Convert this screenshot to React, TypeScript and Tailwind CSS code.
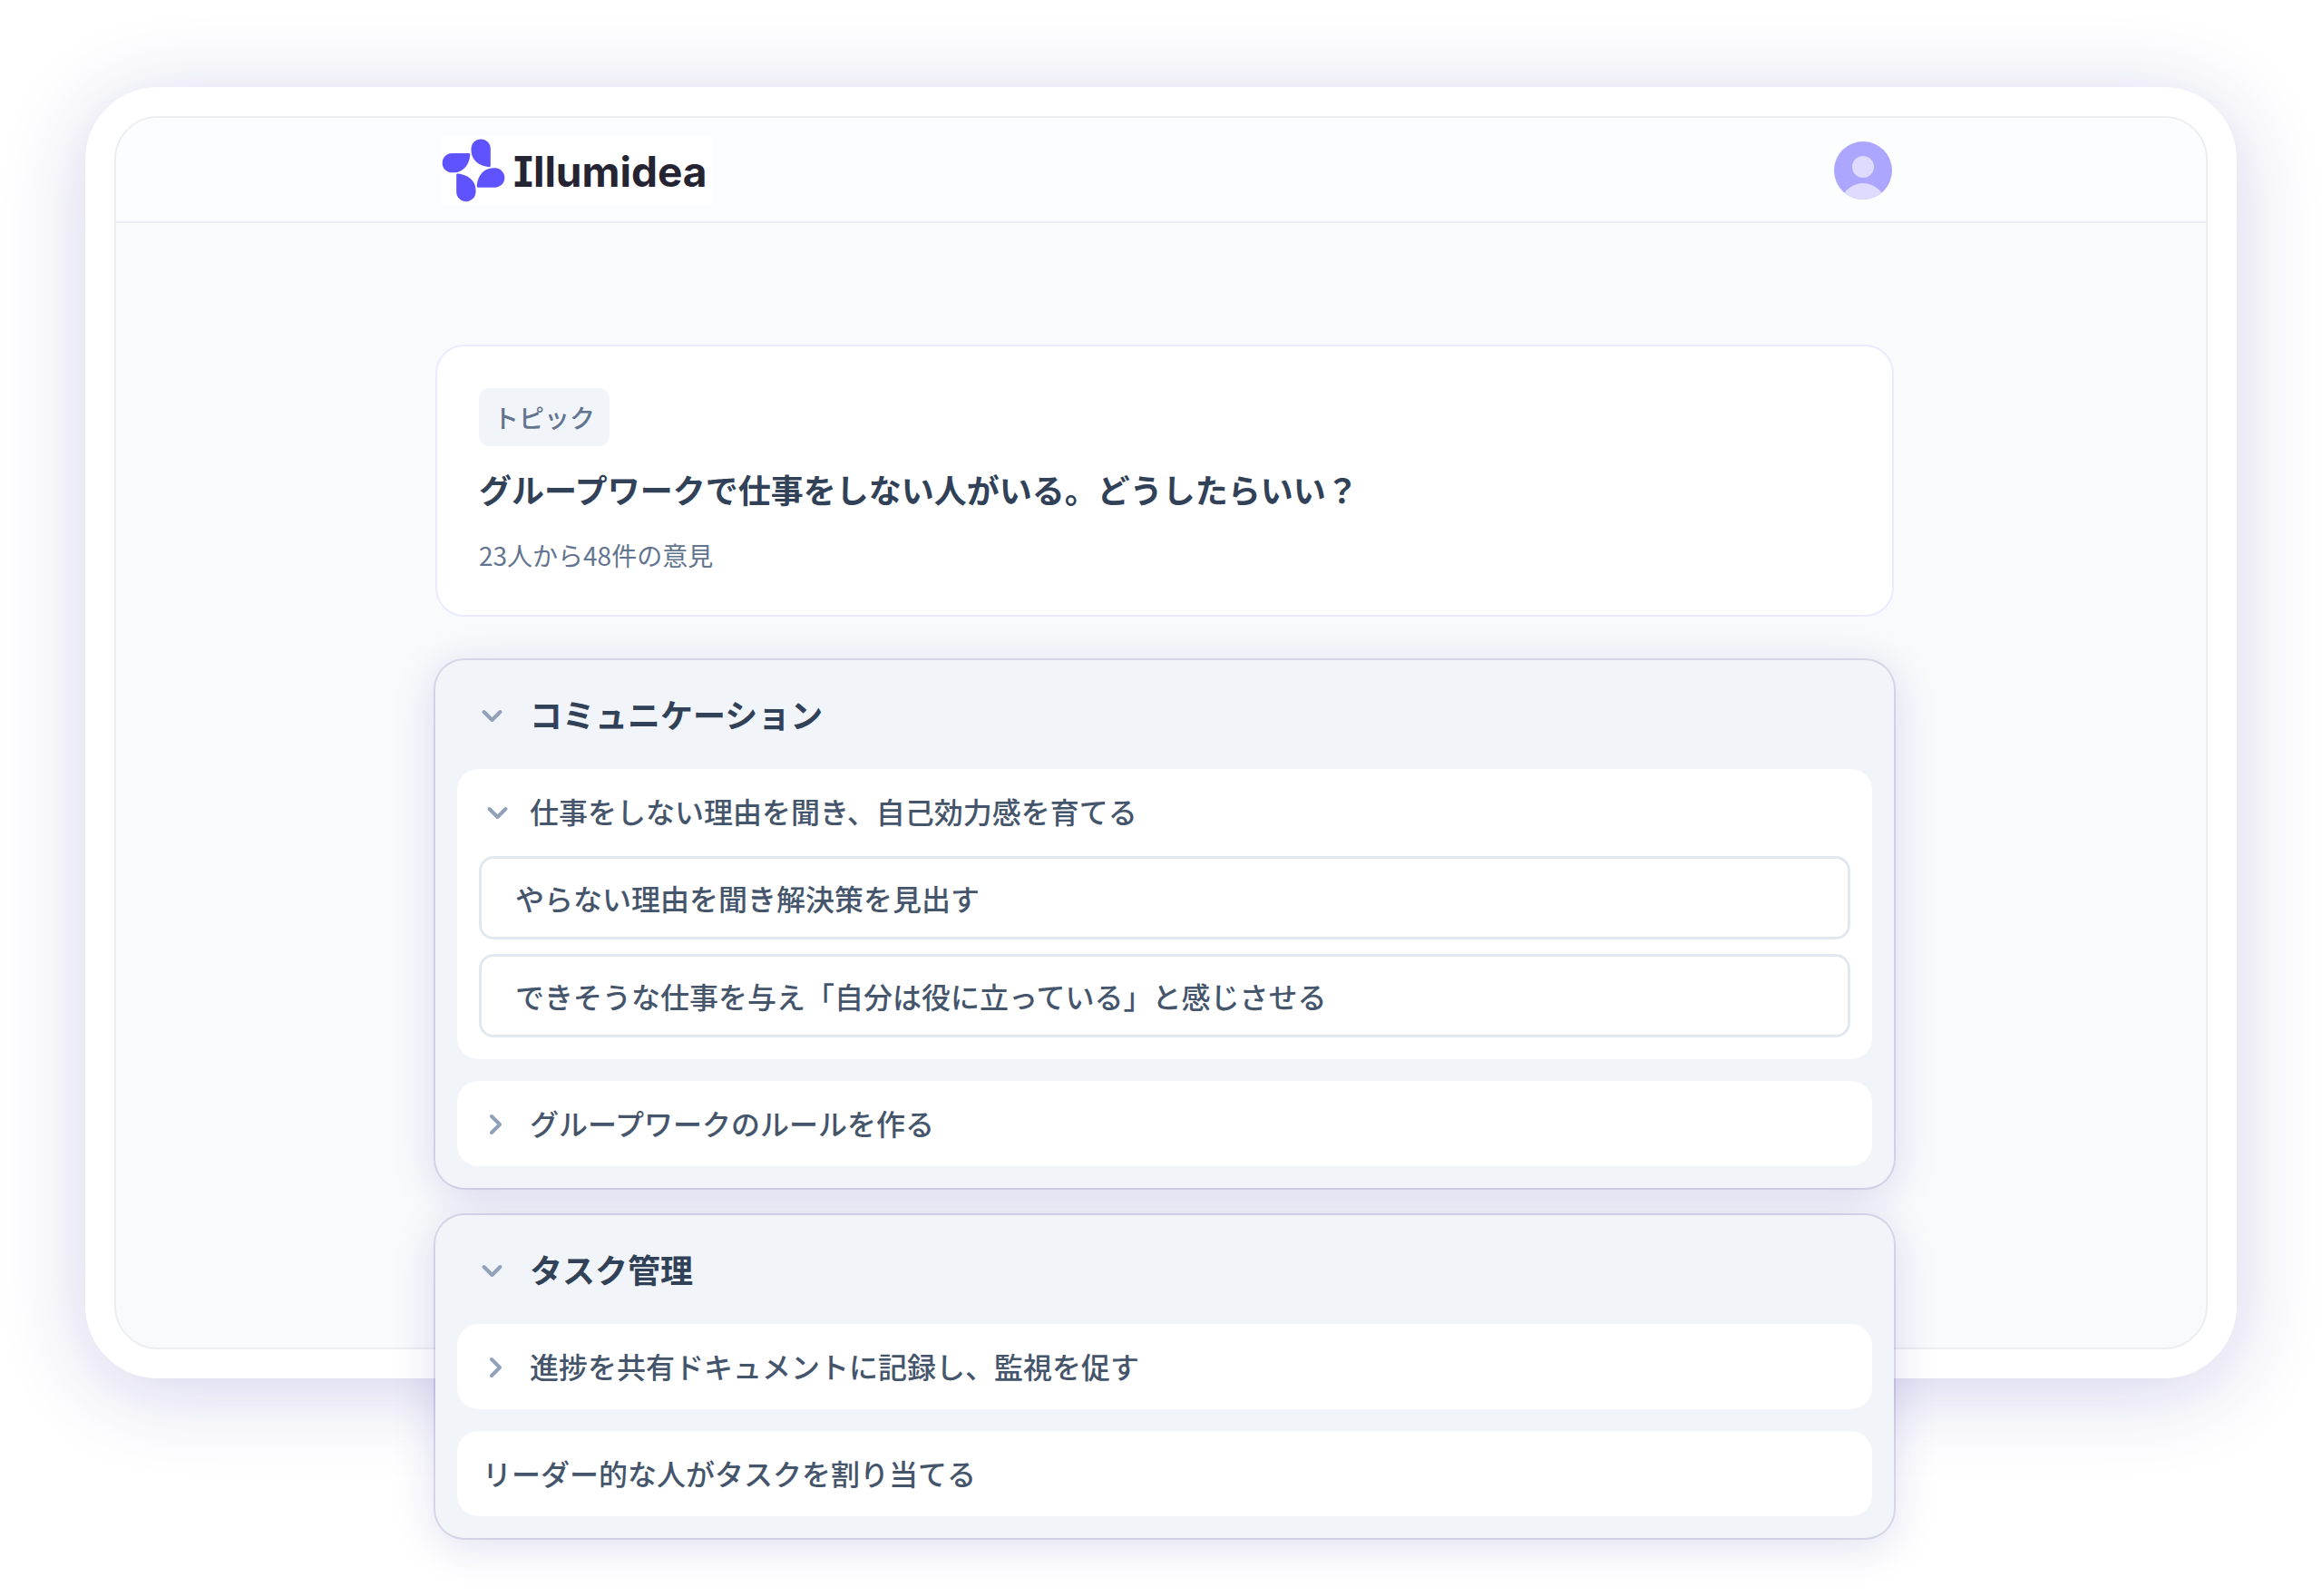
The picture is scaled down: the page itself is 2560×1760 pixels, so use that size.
import { useState } from "react";

type Item = { title: string; opinions?: string[]; expandable?: boolean; open?: boolean };
type Group = { title: string; items: Item[] };

const groups: Group[] = [
  {
    title: "コミュニケーション",
    items: [
      {
        title: "仕事をしない理由を聞き、自己効力感を育てる",
        expandable: true,
        open: true,
        opinions: [
          "やらない理由を聞き解決策を見出す",
          "できそうな仕事を与え「自分は役に立っている」と感じさせる",
        ],
      },
      { title: "グループワークのルールを作る", expandable: true },
    ],
  },
  {
    title: "タスク管理",
    items: [
      { title: "進捗を共有ドキュメントに記録し、監視を促す", expandable: true },
      { title: "リーダー的な人がタスクを割り当てる" },
    ],
  },
];

function Chevron({ open }: { open: boolean }) {
  return (
    <svg viewBox="0 0 32 32" className="size-8 shrink-0 text-slate-400" fill="none" stroke="currentColor" strokeWidth="4" strokeLinecap="round" strokeLinejoin="round" aria-hidden="true">
      <path d={open ? "m7.5 14 9 9 9-9" : "m10 9 9 9-9 9"} />
    </svg>
  );
}

function Logo() {
  const petal = "M85 117H141Q145 117 145 121C143 155 122 181 90 181H85A32 32 0 0 1 85 117Z";
  return (
    <a href="#" className="flex h-[76px] w-[300px] items-center gap-2 bg-white">
      <svg viewBox="48 60 216 228" className="h-[76px] w-[72px] shrink-0" fill="#5f52ff" aria-hidden="true">
        {[0, 90, 180, 270].map((angle) => (
          <path key={angle} d={petal} transform={`rotate(${angle} 156 173.5)`} />
        ))}
      </svg>
      <span className="pt-0.5 font-['Inter',sans-serif] text-[46px] leading-[72px] font-bold text-[#252432] [font-feature-settings:'cv08']">Illumidea</span>
    </a>
  );
}

function Avatar() {
  return (
    <button type="button" aria-label="アカウント" className="size-16 overflow-hidden rounded-full bg-[#ada6ff]">
      <svg viewBox="0 0 64 64" className="size-16" fill="#dedbff" aria-hidden="true">
        <circle cx="32" cy="28" r="12" />
        <circle cx="32" cy="71" r="25" />
      </svg>
    </button>
  );
}

function ItemCard({ item }: { item: Item }) {
  const [open, setOpen] = useState(Boolean(item.open));
  const text = "text-[32px] leading-[46px] font-medium text-slate-600";
  return (
    <li className="rounded-3xl bg-white">
      {item.expandable ? (
        <button
          type="button"
          aria-expanded={open}
          onClick={() => setOpen(!open)}
          className={`flex w-full items-center gap-5 px-7 pt-[23px] pb-[25px] text-left ${text}`}
        >
          <Chevron open={open} />
          {item.title}
        </button>
      ) : (
        <p className={`px-7 pt-[23px] pb-[25px] ${text}`}>{item.title}</p>
      )}
      {open && item.opinions && (
        <ul className="flex flex-col gap-4 px-6 pt-0.5 pb-6">
          {item.opinions.map((opinion) => (
            <li key={opinion} className={`rounded-2xl border-3 border-slate-200 px-[37px] py-5 ${text}`}>
              {opinion}
            </li>
          ))}
        </ul>
      )}
    </li>
  );
}

function GroupCard({ group }: { group: Group }) {
  const [open, setOpen] = useState(true);
  return (
    <section className="rounded-[32px] bg-slate-100 shadow-[0_0_0_2px_rgba(35,25,120,0.12),0_8px_48px_rgba(35,25,155,0.15)]">
      <h2 className="text-4xl font-bold text-slate-700">
        <button
          type="button"
          aria-expanded={open}
          onClick={() => setOpen(!open)}
          className="flex h-[120px] w-full items-center gap-[26px] px-[46px] pb-0.5 text-left"
        >
          <Chevron open={open} />
          {group.title}
        </button>
      </h2>
      {open && (
        <ul className="flex flex-col gap-6 px-6 pb-6">
          {group.items.map((item) => (
            <ItemCard key={item.title} item={item} />
          ))}
        </ul>
      )}
    </section>
  );
}

export default function App() {
  return (
    <div
      lang="ja"
      className="min-h-screen bg-white px-[94px] pt-24 pb-60 font-['Noto_Sans_CJK_JP',sans-serif]"
    >
      <div className="rounded-[80px] bg-white p-8 shadow-[0_14px_96px_rgba(35,25,155,0.2)]">
        <div className="rounded-[48px] border-2 border-[#edeef2] bg-slate-50">
          <header className="rounded-t-[46px] border-b-2 border-[#ebecf4] bg-[#fcfdff] pl-2">
            <div className="mx-auto flex h-[114px] max-w-[1608px] items-center justify-between pt-0.5 pr-0.5 pl-1.5">
              <Logo />
              <Avatar />
            </div>
          </header>
          <main className="pt-[134px] pl-2">
            <div className="mx-auto max-w-[1608px]">
              <section className="flex flex-col items-start rounded-[32px] border-2 border-[#ebebff] bg-white p-[46px]">
                <span className="rounded-xl bg-slate-100 px-4 text-[28px] leading-[64px] font-medium text-slate-500">トピック</span>
                <h1 className="mt-4 text-4xl leading-[62px] font-bold text-slate-700">
                  グループワークで仕事をしない人がいる。どうしたらいい？
                </h1>
                <p className="mt-[22px] text-[28px] leading-10 text-slate-500">23人から48件の意見</p>
              </section>
              <div className="mt-12 -mb-[210px] flex flex-col gap-[30px]">
                {groups.map((group) => (
                  <GroupCard key={group.title} group={group} />
                ))}
              </div>
            </div>
          </main>
        </div>
      </div>
    </div>
  );
}
